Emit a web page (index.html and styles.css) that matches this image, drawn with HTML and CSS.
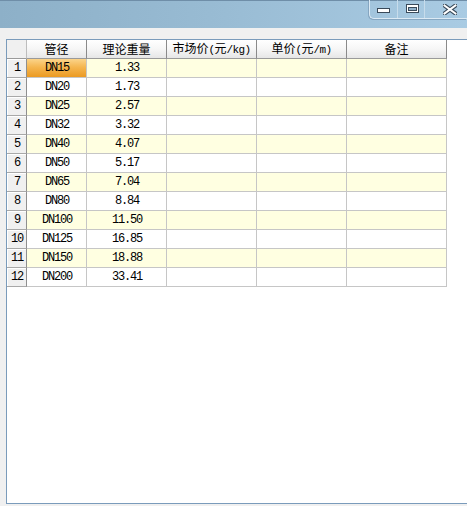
FILE: index.html
```html
<!DOCTYPE html>
<html>
<head>
<meta charset="utf-8">
<link rel="stylesheet" href="styles.css">
</head>
<body>
<div class="window">
  <div class="titlebar">
    <div class="caption-btns">
      <div class="cbtn cbtn-min">
        <svg width="14" height="6" viewBox="0 0 14 6"><rect x="0.5" y="0.5" width="12" height="4" fill="#fff" stroke="#3a4a5a"/></svg>
      </div>
      <div class="cbtn cbtn-max">
        <svg width="14" height="10" viewBox="0 0 14 10"><rect x="0.5" y="0.5" width="12" height="8" fill="#fff" stroke="#3a4a5a"/><rect x="2.5" y="3.5" width="8" height="3" fill="#8fb0c9" stroke="#3a4a5a"/></svg>
      </div>
      <div class="cbtn cbtn-close">
        <svg width="14" height="11" viewBox="0 0 14 11"><path d="M1.5 1.5 L12.5 9.5 M12.5 1.5 L1.5 9.5" stroke="#3a4a5a" stroke-width="4.2" stroke-linecap="square"/><path d="M1.5 1.5 L12.5 9.5 M12.5 1.5 L1.5 9.5" stroke="#fff" stroke-width="2" stroke-linecap="square"/></svg>
      </div>
    </div>
  </div>
  <div class="client">
    <div class="gridbox">
      <table class="grid">
        <thead>
          <tr>
            <th class="corner"></th>
            <th class="c1">管径</th>
            <th class="c2">理论重量</th>
            <th class="c3">市场价<span class="lat">(</span>元<span class="lat">/kg)</span></th>
            <th class="c4">单价<span class="lat">(</span>元<span class="lat">/m)</span></th>
            <th class="c5">备注</th>
          </tr>
        </thead>
        <tbody>
          <tr class="odd"><td class="rh">1</td><td class="sel">DN15</td><td>1.33</td><td></td><td></td><td></td></tr>
          <tr><td class="rh">2</td><td>DN20</td><td>1.73</td><td></td><td></td><td></td></tr>
          <tr class="odd"><td class="rh">3</td><td>DN25</td><td>2.57</td><td></td><td></td><td></td></tr>
          <tr><td class="rh">4</td><td>DN32</td><td>3.32</td><td></td><td></td><td></td></tr>
          <tr class="odd"><td class="rh">5</td><td>DN40</td><td>4.07</td><td></td><td></td><td></td></tr>
          <tr><td class="rh">6</td><td>DN50</td><td>5.17</td><td></td><td></td><td></td></tr>
          <tr class="odd"><td class="rh">7</td><td>DN65</td><td>7.04</td><td></td><td></td><td></td></tr>
          <tr><td class="rh">8</td><td>DN80</td><td>8.84</td><td></td><td></td><td></td></tr>
          <tr class="odd"><td class="rh">9</td><td>DN100</td><td>11.50</td><td></td><td></td><td></td></tr>
          <tr><td class="rh">10</td><td>DN125</td><td>16.85</td><td></td><td></td><td></td></tr>
          <tr class="odd"><td class="rh">11</td><td>DN150</td><td>18.88</td><td></td><td></td><td></td></tr>
          <tr><td class="rh">12</td><td>DN200</td><td>33.41</td><td></td><td></td><td></td></tr>
        </tbody>
      </table>
    </div>
  </div>
</div>
</body>
</html>
```
FILE: styles.css
```css
html, body {
  margin: 0;
  padding: 0;
  width: 467px;
  height: 506px;
  overflow: hidden;
  background: #f0f0f0;
}
.window {
  width: 467px;
  height: 506px;
  display: flex;
  flex-direction: column;
}
.titlebar {
  height: 28px;
  flex: none;
  background: linear-gradient(to right, #8db0c8 0%, #98bbd3 45%, #a9cbe3 100%);
  border-top: 1px solid #6f8ea8;
  box-sizing: border-box;
  display: flex;
  justify-content: flex-end;
  align-items: flex-start;
}
.caption-btns {
  display: flex;
  height: 18px;
  margin-top: -1px;
  border-left: 1px solid #dceaf4;
  border-bottom: 1px solid #dceaf4;
  border-bottom-left-radius: 5px;
  box-shadow: -1px 1px 0 rgba(80, 110, 140, 0.35);
}
.cbtn {
  display: flex;
  align-items: center;
  justify-content: center;
  height: 18px;
  box-sizing: border-box;
}
.cbtn-min {
  width: 28px;
  border-right: 1px solid #c7dceb;
  padding-top: 4px;
}
.cbtn-max {
  width: 27px;
  border-right: 1px solid #c7dceb;
  padding-left: 3px;
}
.cbtn-close {
  width: 42px;
  padding-left: 8px;
}
.client {
  flex: 1;
  padding: 11px 0 2px 6px;
  display: flex;
  min-height: 0;
}
.gridbox {
  flex: 1;
  background: #fff;
  border: 1px solid #7a9bbb;
  border-right: none;
}
.grid {
  border-collapse: separate;
  border-spacing: 0;
  table-layout: fixed;
  font-family: "Liberation Mono", "DejaVu Sans Mono", monospace;
  font-size: 12px;
  letter-spacing: -1.2px;
  color: #000;
}
.grid th {
  height: 18px;
  box-sizing: border-box;
  padding: 0;
  font-family: "Noto Sans CJK SC", sans-serif;
  font-size: 12px;
  letter-spacing: 0;
  font-weight: normal;
  line-height: 16px;
  background: linear-gradient(to bottom, #ffffff 0%, #f6f6f6 50%, #e6e6e6 100%);
  border-right: 1px solid #8a8a8a;
  border-bottom: 1px solid #9a9a9a;
  text-align: center;
  white-space: nowrap;
}
.grid th .lat {
  font-family: "Liberation Mono", monospace;
  font-size: 11px;
  letter-spacing: -0.6px;
}
.grid th.corner {
  width: 20px;
  background: #f0f0f0;
  border-right: 1px solid #bdbdbd;
}
.c1 { width: 60px; }
.c2 { width: 80px; }
.c3 { width: 90px; }
.c4 { width: 90px; }
.c5 { width: 100px; }
.grid td {
  height: 19px;
  box-sizing: border-box;
  padding: 0 0 0 1px;
  text-align: center;
  border-right: 1px solid #c6c6c6;
  border-bottom: 1px solid #c6c6c6;
  line-height: 18px;
  white-space: nowrap;
}
.grid tr.odd td {
  background: #ffffe1;
}
.grid td.rh,
.grid tr.odd td.rh {
  background: #f0f0f0;
  border-right: 1px solid #8f8f8f;
  border-bottom: 1px solid #a8a8a8;
  box-shadow: inset 1px 1px 0 #ffffff;
}
.grid tr.odd td.sel {
  background: linear-gradient(to bottom, #fbd48a 0%, #f5b650 45%, #eb9a22 100%);
}
```
